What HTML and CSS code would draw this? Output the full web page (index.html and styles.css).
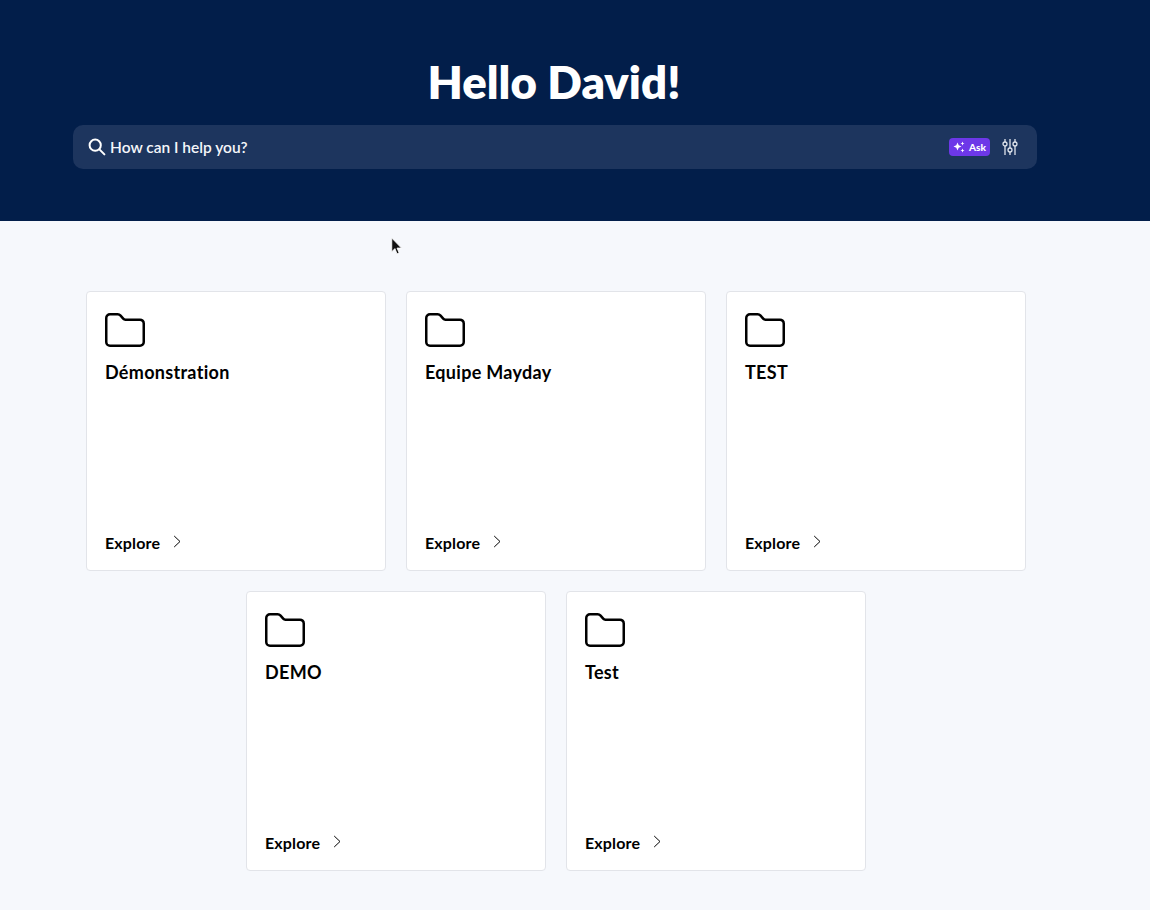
FILE: index.html
```html
<!DOCTYPE html>
<html lang="en">
<head>
<meta charset="utf-8">
<title>Home</title>
<link rel="stylesheet" href="styles.css">
</head>
<body>
<div class="page">
  <header class="hero">
    <h1 class="title">Hello David!</h1>
    <div class="search">
      <svg class="search-icon" viewBox="0 0 18 18" width="18" height="18" fill="none" stroke="currentColor" stroke-width="2" stroke-linecap="round"><circle cx="7.2" cy="7.2" r="5.6"/><path d="M11.4 11.4 16.4 16.4"/></svg>
      <span class="placeholder">How can I help you?</span>
      <span class="ask">
        <svg viewBox="0 0 12 12" width="12" height="12" fill="#fff"><path d="M4.5 1.5 5.7 4.3 8.5 5.5 5.7 6.7 4.5 9.5 3.3 6.7.5 5.5 3.3 4.3Z"/><path d="M9.5.5 10.1 1.9 11.5 2.5 10.1 3.1 9.5 4.5 8.9 3.1 7.5 2.5 8.9 1.9Z"/><path d="M9.5 7.5 10.1 8.9 11.5 9.5 10.1 10.1 9.5 11.5 8.9 10.1 7.5 9.5 8.9 8.9Z"/></svg>
        Ask
      </span>
      <svg class="filters" viewBox="0 0 16 18" width="16" height="18" fill="none" stroke="currentColor" stroke-width="1.3"><path d="M3 1v3M3 8v9M8 1v9M8 14v3M13 1v3M13 8v9"/><circle cx="3" cy="6" r="2"/><circle cx="8" cy="12" r="2"/><circle cx="13" cy="6" r="2"/></svg>
    </div>
  </header>
  <main class="cards">
    <article class="card">
      <svg class="folder" viewBox="0 0 40 34" width="40" height="34" fill="none" stroke="currentColor" stroke-width="2.5" stroke-linejoin="round"><path d="M1.25 5A3.75 3.75 0 0 1 5 1.25h7.6c1.2 0 2.2.5 3 1.4l2.6 3c.6.7 1.4 1 2.3 1H35a3.75 3.75 0 0 1 3.75 3.75V29a3.75 3.75 0 0 1-3.75 3.75H5A3.75 3.75 0 0 1 1.25 29Z"/></svg>
      <h2 class="card-title">Démonstration</h2>
      <a class="explore">Explore <svg viewBox="0 0 8 13" width="8" height="13" fill="none" stroke="currentColor" stroke-width="1"><path d="M1.2 1 7 6.5 1.2 12"/></svg></a>
    </article>
    <article class="card">
      <svg class="folder" viewBox="0 0 40 34" width="40" height="34" fill="none" stroke="currentColor" stroke-width="2.5" stroke-linejoin="round"><path d="M1.25 5A3.75 3.75 0 0 1 5 1.25h7.6c1.2 0 2.2.5 3 1.4l2.6 3c.6.7 1.4 1 2.3 1H35a3.75 3.75 0 0 1 3.75 3.75V29a3.75 3.75 0 0 1-3.75 3.75H5A3.75 3.75 0 0 1 1.25 29Z"/></svg>
      <h2 class="card-title">Equipe Mayday</h2>
      <a class="explore">Explore <svg viewBox="0 0 8 13" width="8" height="13" fill="none" stroke="currentColor" stroke-width="1"><path d="M1.2 1 7 6.5 1.2 12"/></svg></a>
    </article>
    <article class="card">
      <svg class="folder" viewBox="0 0 40 34" width="40" height="34" fill="none" stroke="currentColor" stroke-width="2.5" stroke-linejoin="round"><path d="M1.25 5A3.75 3.75 0 0 1 5 1.25h7.6c1.2 0 2.2.5 3 1.4l2.6 3c.6.7 1.4 1 2.3 1H35a3.75 3.75 0 0 1 3.75 3.75V29a3.75 3.75 0 0 1-3.75 3.75H5A3.75 3.75 0 0 1 1.25 29Z"/></svg>
      <h2 class="card-title">TEST</h2>
      <a class="explore">Explore <svg viewBox="0 0 8 13" width="8" height="13" fill="none" stroke="currentColor" stroke-width="1"><path d="M1.2 1 7 6.5 1.2 12"/></svg></a>
    </article>
    <article class="card">
      <svg class="folder" viewBox="0 0 40 34" width="40" height="34" fill="none" stroke="currentColor" stroke-width="2.5" stroke-linejoin="round"><path d="M1.25 5A3.75 3.75 0 0 1 5 1.25h7.6c1.2 0 2.2.5 3 1.4l2.6 3c.6.7 1.4 1 2.3 1H35a3.75 3.75 0 0 1 3.75 3.75V29a3.75 3.75 0 0 1-3.75 3.75H5A3.75 3.75 0 0 1 1.25 29Z"/></svg>
      <h2 class="card-title">DEMO</h2>
      <a class="explore">Explore <svg viewBox="0 0 8 13" width="8" height="13" fill="none" stroke="currentColor" stroke-width="1"><path d="M1.2 1 7 6.5 1.2 12"/></svg></a>
    </article>
    <article class="card">
      <svg class="folder" viewBox="0 0 40 34" width="40" height="34" fill="none" stroke="currentColor" stroke-width="2.5" stroke-linejoin="round"><path d="M1.25 5A3.75 3.75 0 0 1 5 1.25h7.6c1.2 0 2.2.5 3 1.4l2.6 3c.6.7 1.4 1 2.3 1H35a3.75 3.75 0 0 1 3.75 3.75V29a3.75 3.75 0 0 1-3.75 3.75H5A3.75 3.75 0 0 1 1.25 29Z"/></svg>
      <h2 class="card-title">Test</h2>
      <a class="explore">Explore <svg viewBox="0 0 8 13" width="8" height="13" fill="none" stroke="currentColor" stroke-width="1"><path d="M1.2 1 7 6.5 1.2 12"/></svg></a>
    </article>
  </main>
  <svg class="cursor" viewBox="0 0 12 18" width="13" height="19"><path d="M1.5 1v13l3-3 2 5 2-1-2-4.5h4.2Z" fill="#111" stroke="#fff" stroke-width=".8"/></svg>
</div>
</body>
</html>
```
FILE: styles.css
```css
* { box-sizing: border-box; }
html, body { margin: 0; height: 100%; }
body {
  background: #f6f8fc;
  font-family: Lato, "Liberation Sans", sans-serif;
  font-variant-ligatures: none;
  color: #000;
  overflow: hidden;
}
.page { position: relative; min-height: 910px; }
.hero {
  height: 221px;
  background: #021e4a;
  padding: 55px 115px 0 73px;
}
.title {
  margin: 0 0 16px;
  height: 54px;
  line-height: 54px;
  text-align: center;
  font-size: 45.5px;
  font-weight: 800;
  color: #fff;
}
.search {
  display: flex;
  align-items: center;
  width: 964px;
  height: 44px;
  padding: 0 19px 0 15px;
  border-radius: 10px;
  background: #1d355e;
  color: #fff;
}
.search-icon { flex: none; margin-right: 4px; color: #fff; }
.placeholder {
  flex: 1;
  margin-top: -1px;
  font-size: 15.5px;
  font-weight: 600;
  color: #f4f6fa;
}
.ask {
  display: flex;
  align-items: center;
  gap: 4px;
  height: 18px;
  padding: 0 4px;
  margin-right: 12px;
  border-radius: 4px;
  background: #6d38e8;
  font-size: 10px;
  font-weight: 900;
  color: #fff;
}
.filters { flex: none; color: #dfe4ec; }
.cards {
  display: flex;
  flex-wrap: wrap;
  justify-content: center;
  gap: 20px;
  width: 1112px;
  padding-top: 70px;
}
.card {
  display: flex;
  flex-direction: column;
  width: 300px;
  height: 280px;
  padding: 21px 18px 15px;
  border: 1px solid #e2e4e9;
  border-radius: 4px;
  background: #fff;
}
.folder { flex: none; }
.card-title {
  margin: 11px 0 0;
  font-size: 18px;
  line-height: 28px;
  font-weight: 700;
  letter-spacing: .3px;
}
.explore {
  display: flex;
  align-items: center;
  gap: 13px;
  margin-top: auto;
  font-size: 16px;
  line-height: 24px;
  font-weight: 700;
  letter-spacing: .15px;
}
.explore svg { margin-top: -3px; }
.cursor { position: absolute; left: 390px; top: 237px; }
```
